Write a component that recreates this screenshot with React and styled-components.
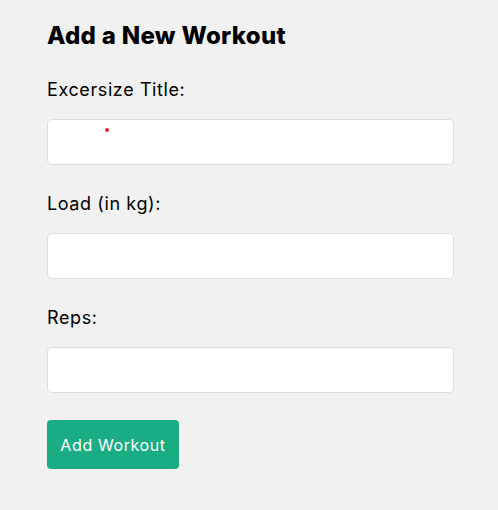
import React from 'react'
import styled, { createGlobalStyle } from 'styled-components'

const GlobalStyle = createGlobalStyle`
  body {
    margin: 0;
    background: #f1f1f1;
    font-family: Inter, "Open Sans", sans-serif;
    color: #000;
  }
`

const fields = [
  { id: 'title', label: 'Excersize Title:' },
  { id: 'load', label: 'Load (in kg):' },
  { id: 'reps', label: 'Reps:' },
]

function App () {
  return (
    <>
      <GlobalStyle/>
      <Form onSubmit={e => e.preventDefault()}>
        <Heading>Add a New Workout</Heading>
        {fields.map((field, i) => (
          <Field key={field.id}>
            <Label htmlFor={field.id}>{field.label}</Label>
            <InputWrap>
              <Input id={field.id} type={field.id === 'title' ? 'text' : 'number'}/>
              {i === 0 && <Marker/>}
            </InputWrap>
          </Field>
        ))}
        <Button type="submit">Add Workout</Button>
      </Form>
    </>
  )
}

const Form = styled.form`
  display: flex;
  flex-direction: column;
  align-items: flex-start;
  padding: 18px 44px 20px 47px;
`

const Heading = styled.h3`
  margin: 0 0 22px;
  font-size: 24px;
  line-height: 36px;
  font-weight: 800;
  letter-spacing: 0.3px;
`

const Field = styled.div`
  width: 100%;
  margin-bottom: 25px;
`

const Label = styled.label`
  display: block;
  font-size: 18px;
  line-height: 27px;
  font-weight: 400;
  letter-spacing: 0.6px;
`

const InputWrap = styled.div`
  position: relative;
  margin-top: 16px;
`

const Input = styled.input`
  display: block;
  box-sizing: border-box;
  width: 100%;
  height: 46px;
  padding: 10px;
  border: 1px solid #ddd;
  border-radius: 5px;
  background: #fff;
  font-family: inherit;
  font-size: 16px;
  outline: none;
`

const Marker = styled.span`
  position: absolute;
  left: 58px;
  top: 9px;
  width: 4px;
  height: 4px;
  border-radius: 50%;
  background: #e8262a;
`

const Button = styled.button`
  width: 132px;
  height: 49px;
  margin-top: 2px;
  padding: 0;
  border: 0;
  border-radius: 4px;
  background: #1aac83;
  color: #fff;
  font-family: inherit;
  font-size: 16px;
  letter-spacing: 0.6px;
  cursor: pointer;
`

export default App
